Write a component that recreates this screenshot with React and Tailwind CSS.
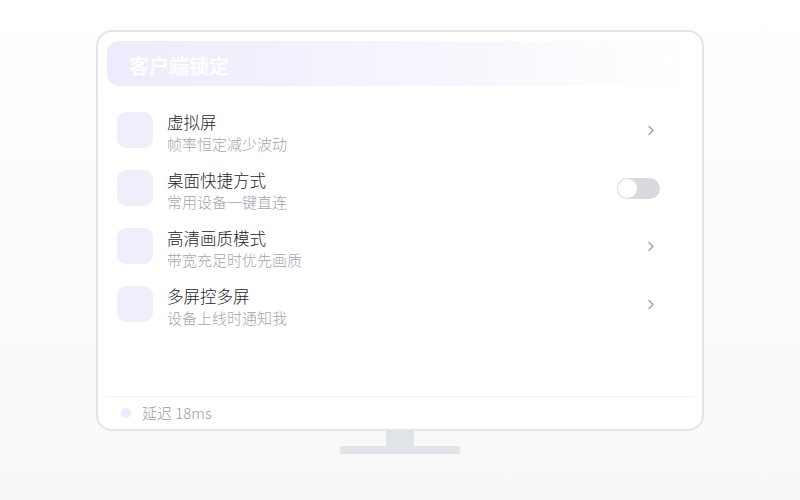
import React from "react";

const rows = [
  { t: "虚拟屏", s: "帧率恒定减少波动", r: "chev" },
  { t: "桌面快捷方式", s: "常用设备一键直连", r: "toggle" },
  { t: "高清画质模式", s: "带宽充足时优先画质", r: "chev" },
  { t: "多屏控多屏", s: "设备上线时通知我", r: "chev" },
];

function Chevron() {
  return (
    <svg width="8" height="11" viewBox="0 0 8 11" fill="none">
      <path d="M2 1.5l4 4-4 4" stroke="#9a9ea8" strokeWidth="1.3" strokeLinecap="round" strokeLinejoin="round" />
    </svg>
  );
}

export default function App() {
  return (
    <div
      className="w-full h-[500px] bg-gradient-to-b from-white to-[#f8f8f9] flex flex-col items-center pt-[30px]"
      style={{ fontFamily: '"Noto Sans CJK SC", "Noto Sans", sans-serif' }}
    >
      <div className="w-[608px] h-[401px] rounded-[16px] border-2 border-[#e3e5ea] bg-white flex flex-col px-[9px] pt-[9px]">
        <div className="h-[45px] rounded-[12px] bg-gradient-to-r from-[#eeebfc] via-[#f6f4fd] to-white flex items-center justify-between pl-[22px] pr-[21px]">
          <span className="text-[20px] font-bold text-white/90 leading-none mt-[4px]">客户端锁定</span>
          <div className="flex gap-[7px] mt-[-4px]">
            <span className="w-[10px] h-[10px] rounded-full bg-white/80" />
            <span className="w-[10px] h-[10px] rounded-full bg-white/80" />
            <span className="w-[10px] h-[10px] rounded-full bg-white/80" />
          </div>
        </div>
        <div className="mt-[26px] flex flex-col flex-1">
          {rows.map((r) => (
            <div key={r.t} className="h-[58px] flex items-start pl-[10px] pr-[33px]">
              <div className="w-[36px] h-[36px] rounded-[9px] bg-[#f1eefc] shrink-0" />
              <div className="ml-[14px] flex flex-col flex-1">
                <span className="text-[16.5px] leading-[20px] font-light text-[#26262b]">{r.t}</span>
                <span className="text-[15px] leading-[24px] font-light text-[#a2a6af]">{r.s}</span>
              </div>
              <div className="h-[36px] w-[44px] flex items-center justify-end">
                {r.r === "toggle" ? (
                  <div className="w-[43px] h-[21px] rounded-full bg-[#d9dae0] p-[1px] flex items-center">
                    <div className="w-[19px] h-[19px] rounded-full bg-white" />
                  </div>
                ) : (
                  <div className="pr-[5px] flex items-center">
                    <Chevron />
                  </div>
                )}
              </div>
            </div>
          ))}
        </div>
        <div className="h-[33px] border-t border-[#eef0f3] flex items-center pl-[14px]">
          <span className="w-[10px] h-[10px] rounded-full bg-[#eeebfc]" />
          <span className="ml-[11px] text-[15px] font-light text-[#979ba4]">延迟 18ms</span>
        </div>
      </div>
      <div className="w-[28px] h-[15px] bg-[#e1e4e8]" />
      <div className="w-[120px] h-[8px] bg-[#e1e4e8]" />
    </div>
  );
}
